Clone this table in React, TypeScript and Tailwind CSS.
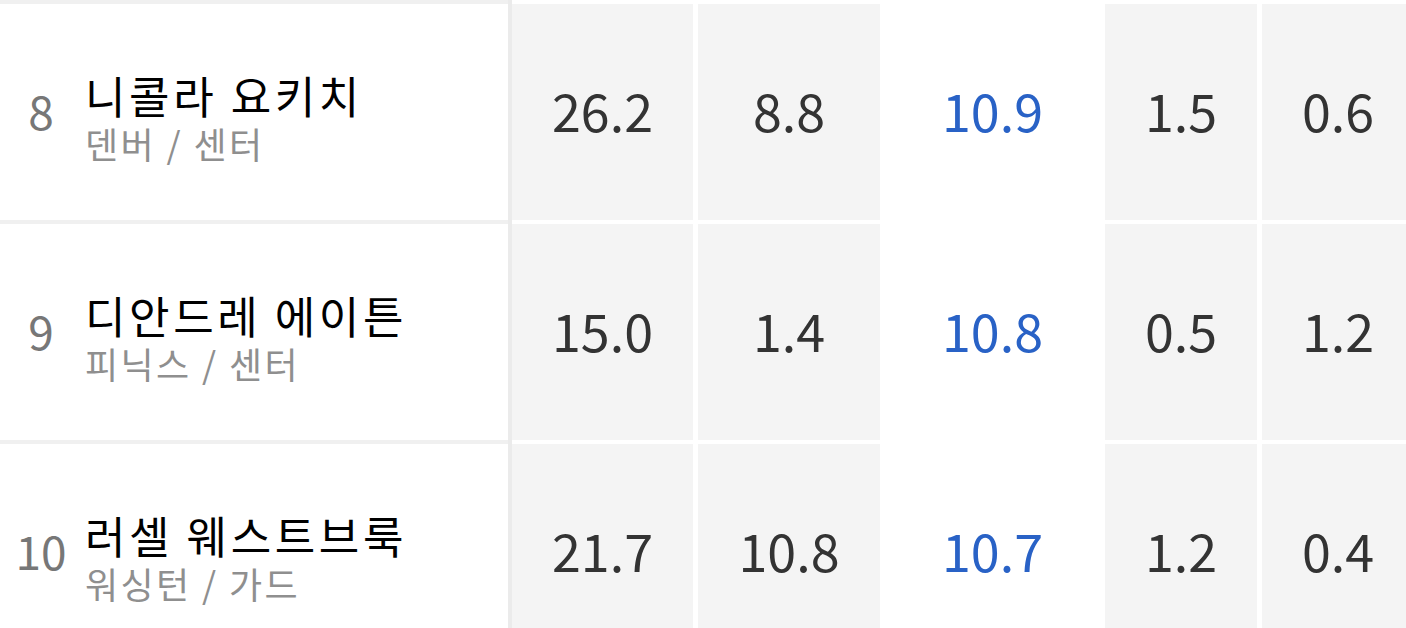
import React from 'react';

type Player = {
  rank: number;
  name: string;
  team: string;
  stats: [string, string, string, string, string];
};

const players: Player[] = [
  { rank: 8, name: '니콜라 요키치', team: '덴버 / 센터', stats: ['26.2', '8.8', '10.9', '1.5', '0.6'] },
  { rank: 9, name: '디안드레 에이튼', team: '피닉스 / 센터', stats: ['15.0', '1.4', '10.8', '0.5', '1.2'] },
  { rank: 10, name: '러셀 웨스트브룩', team: '워싱턴 / 가드', stats: ['21.7', '10.8', '10.7', '1.2', '0.4'] },
];

const font = { fontFamily: '"Noto Sans CJK KR", "Noto Sans", sans-serif' };

const StatCell: React.FC<{ value: string; className: string; highlight?: boolean }> = ({ value, className, highlight }) => (
  <div className={`flex pt-[4px] ${className}`}>
    <div
      className={`flex flex-1 items-center justify-center pb-[5px] text-[52px] leading-none ${
        highlight ? 'bg-white text-[#2962c6]' : 'bg-[#f4f4f4] text-[#333333]'
      }`}
    >
      {value}
    </div>
  </div>
);

const Row: React.FC<{ player: Player }> = ({ player }) => (
  <div className="flex h-[220px]">
    {/* Player info */}
    <div className="flex w-[508px] shrink-0 items-center border-t-4 border-[#f0f0f0] bg-white">
      <div className="w-[82px] shrink-0 text-center text-[46px] leading-none text-[#777777] -mt-[4px]">
        {player.rank}
      </div>
      <div className="flex flex-col gap-[8px] pt-[10px] pl-[3px]">
        <span className="text-[44px] leading-none tracking-[3.6px] text-black">{player.name}</span>
        <span className="text-[36px] leading-none tracking-[2.4px] text-[#8f8f8f]">{player.team}</span>
      </div>
    </div>

    {/* Stats */}
    <div className="flex flex-1 border-l-4 border-[#ebebeb]">
      <StatCell value={player.stats[0]} className="w-[186px] pr-[5px]" />
      <StatCell value={player.stats[1]} className="w-[182px]" />
      <StatCell value={player.stats[2]} className="w-[225px]" highlight />
      <StatCell value={player.stats[3]} className="w-[157px] pr-[5px]" />
      <StatCell value={player.stats[4]} className="w-[152px]" />
    </div>
  </div>
);

export default function App() {
  return (
    <div className="h-screen w-full overflow-hidden bg-white" style={font}>
      <div className="flex w-[1414px] flex-col">
        {players.map((p) => (
          <Row key={p.rank} player={p} />
        ))}
      </div>
    </div>
  );
}
